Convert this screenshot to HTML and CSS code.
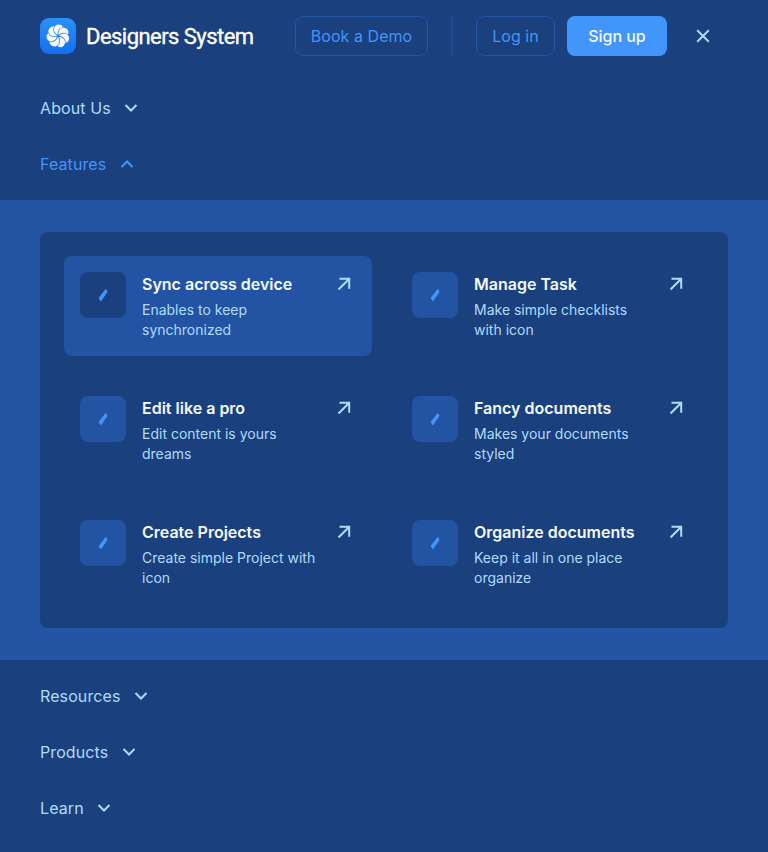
FILE: index.html
```html
<!DOCTYPE html>
<html lang="en">
<head>
<meta charset="utf-8">
<title>Designers System</title>
<link rel="stylesheet" href="styles.css">
</head>
<body>
<svg class="defs" width="0" height="0" aria-hidden="true">
  <symbol id="down" viewBox="0 0 24 24"><path d="M6.500 9l5.500 5.500L17.500 9" fill="none" stroke="currentColor" stroke-width="2"/></symbol>
  <symbol id="up" viewBox="0 0 24 24"><path d="M6.500 15l5.500-5.500 5.500 5.500" fill="none" stroke="currentColor" stroke-width="2"/></symbol>
  <symbol id="arrow" viewBox="0 0 24 24"><path d="M6.500 17.500L16.800 7.200M7.500 6.800h9.700v10" fill="none" stroke="currentColor" stroke-width="2"/></symbol>
  <symbol id="mark" viewBox="0 0 46 46"><path d="M25.800 16.700l1.800 3-6.700 9.900-2.300-3.600z" fill="#4295fa"/></symbol>
</svg>
<header class="header">
  <a class="brand">
    <svg class="logo" viewBox="0 0 36 36">
      <defs><linearGradient id="g" x2="0" y2="1"><stop stop-color="#2b91fb"/><stop offset="1" stop-color="#1470ee"/></linearGradient></defs>
      <rect width="36" height="36" rx="9" fill="url(#g)"/>
      <g transform="translate(18 18)">
        <g id="p"><path d="M-.4-1C-3.600-2.800-4.900-6.400-3.400-9C-1.600-12.400 3.700-12.100 5-8.800C1.500-8.500-.8-5.200-.4-1z" fill="#fff"/></g>
        <use href="#p" transform="rotate(51.430)"/>
        <use href="#p" transform="rotate(102.860)"/>
        <use href="#p" transform="rotate(154.290)"/>
        <use href="#p" transform="rotate(205.710)"/>
        <use href="#p" transform="rotate(257.140)"/>
        <use href="#p" transform="rotate(308.570)"/>
      </g>
    </svg>
    <span class="name">Designers System</span>
  </a>
  <a class="btn demo">Book a Demo</a>
  <span class="divider"></span>
  <a class="btn login">Log in</a>
  <a class="btn signup">Sign up</a>
  <svg class="close" viewBox="0 0 24 24"><path d="M6.200 6.200l11.600 11.600M17.800 6.200L6.200 17.800" fill="none" stroke="currentColor" stroke-width="2"/></svg>
</header>
<nav>
  <div class="group">
    <a class="link">About Us <svg><use href="#down"/></svg></a>
    <a class="link active">Features <svg><use href="#up"/></svg></a>
  </div>
  <section class="band">
    <div class="panel">
      <a class="item selected"><svg class="tile"><use href="#mark"/></svg><div class="copy"><h3>Sync across device</h3><p>Enables to keep synchronized</p></div><svg class="arrow"><use href="#arrow"/></svg></a>
      <a class="item"><svg class="tile"><use href="#mark"/></svg><div class="copy"><h3>Manage Task</h3><p>Make simple checklists with icon</p></div><svg class="arrow"><use href="#arrow"/></svg></a>
      <a class="item"><svg class="tile"><use href="#mark"/></svg><div class="copy"><h3>Edit like a pro</h3><p>Edit content is yours dreams</p></div><svg class="arrow"><use href="#arrow"/></svg></a>
      <a class="item"><svg class="tile"><use href="#mark"/></svg><div class="copy"><h3>Fancy documents</h3><p>Makes your documents styled</p></div><svg class="arrow"><use href="#arrow"/></svg></a>
      <a class="item"><svg class="tile"><use href="#mark"/></svg><div class="copy"><h3>Create Projects</h3><p>Create simple Project with icon</p></div><svg class="arrow"><use href="#arrow"/></svg></a>
      <a class="item"><svg class="tile"><use href="#mark"/></svg><div class="copy"><h3>Organize documents</h3><p>Keep it all in one place organize</p></div><svg class="arrow"><use href="#arrow"/></svg></a>
    </div>
  </section>
  <div class="group">
    <a class="link">Resources <svg><use href="#down"/></svg></a>
    <a class="link">Products <svg><use href="#down"/></svg></a>
    <a class="link">Learn <svg><use href="#down"/></svg></a>
  </div>
</nav>
</body>
</html>
```
FILE: styles.css
```css
* { box-sizing: border-box; }
body {
  margin: 0;
  min-height: 852px;
  background: #1a407d;
  color: #b0dbff;
  font-family: Inter, sans-serif;
  font-size: 16px;
}
.defs { display: block; width: 0; height: 0; }
.header { display: flex; align-items: center; height: 72px; padding: 0 40px; }
.brand { display: flex; align-items: center; gap: 10px; width: 255px; }
.logo { width: 36px; height: 36px; }
.name {
  padding-top: 2px;
  color: #fff;
  font: 400 22px/28px Roboto, sans-serif;
  letter-spacing: -0.54px;
  -webkit-text-stroke: 0.35px #fff;
  white-space: nowrap;
}
.btn {
  display: flex;
  align-items: center;
  justify-content: center;
  height: 40px;
  border: 1px solid #2353a3;
  border-radius: 8px;
  color: #4295fa;
  letter-spacing: 0.05px;
}
.demo { width: 133px; }
.divider { width: 2px; height: 40px; margin: 0 24px 0 23px; background: #1f4a90; }
.login { width: 79px; margin-left: -1px; }
.signup { width: 100px; margin-left: 12px; border: 0; background: #4295fa; color: #f5faff; font-weight: 500; letter-spacing: -0.05px; }
.close { width: 24px; height: 24px; margin-left: 24px; }
.group { display: flex; flex-direction: column; padding: 8px 40px; }
.link { display: flex; align-items: center; gap: 8.5px; height: 56px; letter-spacing: 0.1px; }
.link svg { width: 24px; height: 24px; }
.active { color: #4295fa; }
.band { padding: 32px 40px; background: #2353a3; }
.panel {
  display: grid;
  grid-template-columns: 1fr 1fr;
  gap: 24px;
  padding: 24px;
  border-radius: 8px;
  background: #1a407d;
}
.item { display: flex; height: 100px; padding: 16px; border-radius: 8px; }
.tile { flex: none; width: 46px; height: 46px; border-radius: 8px; background: #2353a3; }
.selected { background: #2353a3; }
.selected .tile { background: #1a407d; }
.copy { flex: 1; margin: 0 12px 0 16px; }
h3 { margin: 0 0 4px; color: #f5faff; font-size: 16px; font-weight: 600; line-height: 24px; white-space: nowrap; }
p { margin: 0; font-size: 14px; line-height: 20px; }
.arrow { flex: none; width: 24px; height: 24px; }
```
